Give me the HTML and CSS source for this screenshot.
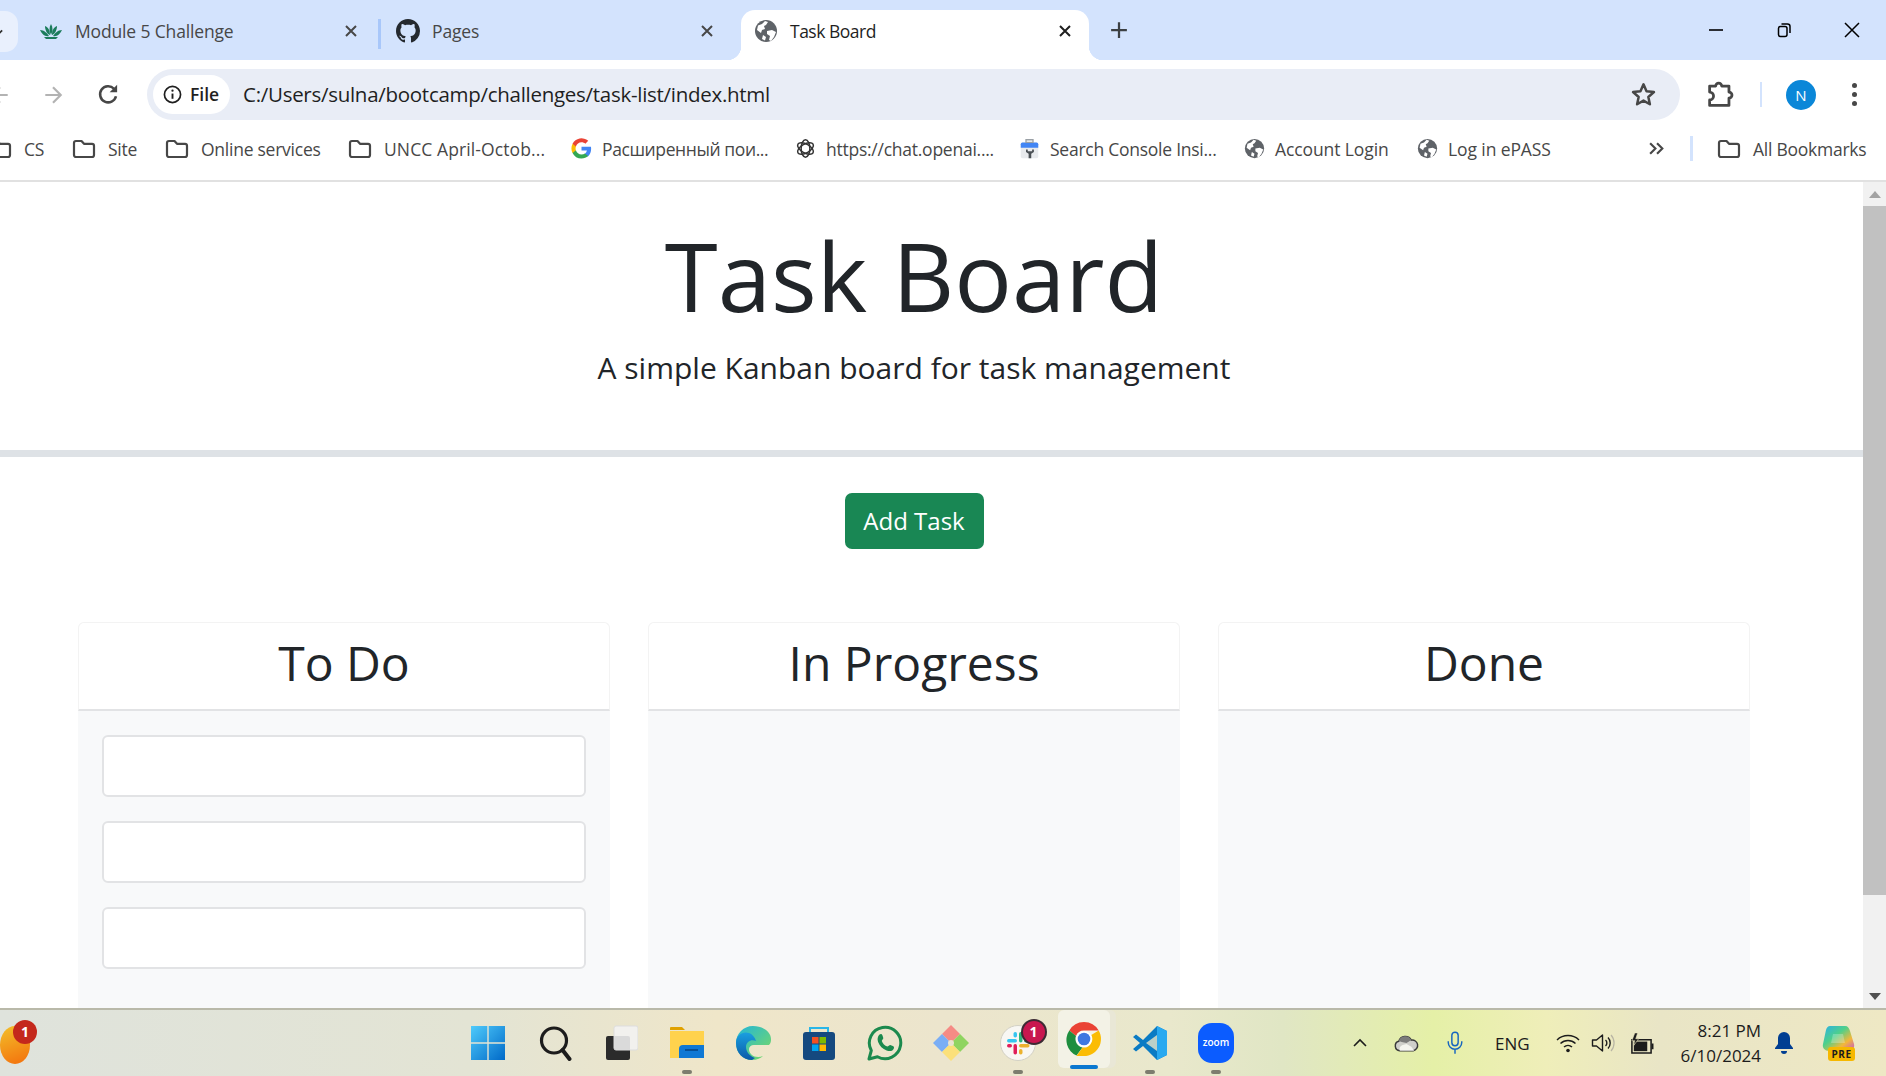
FILE: index.html
```html
<!DOCTYPE html>
<html lang="en">
<head>
<meta charset="UTF-8">
<meta name="viewport" content="width=device-width, initial-scale=1.0">
<title>Task Board</title>
<link rel="stylesheet" href="styles.css">
</head>
<body>

<svg class="sprites" width="0" height="0">
    <symbol id="folder" viewBox="0 0 24 20">
        <path d="M2 4a2 2 0 0 1 2-2h5.500l2.500 2.800h8a2 2 0 0 1 2 2V16a2 2 0 0 1-2 2H4a2 2 0 0 1-2-2z" fill="none" stroke="#474747" stroke-width="2.200" stroke-linejoin="round"/>
    </symbol>
    <symbol id="globe" viewBox="0 0 24 24">
        <circle cx="12" cy="12" r="11" fill="#5f6368"/>
        <path d="M4 6.500 8 5l3-3 3 1-2 3-2 1 1 3-3 1-1 3-4-3zM13 12l5-1 4 2-2 5-3 4-2-1 1-4-3-2zM9 16l3 2-1 3.500-3-1.500z" fill="#fff"/>
    </symbol>
    <symbol id="close-x" viewBox="0 0 14 14">
        <path d="M2 2l10 10M12 2 2 12" fill="none" stroke="currentColor" stroke-width="2"/>
    </symbol>
</svg>

<div id="window">

    <!-- Tabs -->
    <div class="tabstrip">
        <div class="tab-search">
            <svg viewBox="0 0 12 12"><path d="M1 4l5 5 5-5" fill="none" stroke="#333" stroke-width="2"/></svg>
        </div>
        <div class="tab tab-first">
            <svg class="favicon" viewBox="0 0 24 24">
                <path d="M12 5c2 3 2 7 0 11-2-4-2-8 0-11zM6 7c3 1 5 4 5 9-3-1-5-5-5-9zM18 7c-3 1-5 4-5 9 3-1 5-5 5-9zM1 11c4 0 7 3 9 6-4 1-7-2-9-6zM23 11c-4 0-7 3-9 6 4 1 7-2 9-6zM5 18h14l-2 2H7z" fill="#1c7c5c"/>
            </svg>
            <span class="tab-title">Module 5 Challenge</span>
            <svg class="tab-close"><use href="#close-x"/></svg>
        </div>
        <div class="tab-sep"></div>
        <div class="tab tab-second">
            <svg class="favicon" viewBox="0 0 16 16">
                <path d="M8 0C3.580 0 0 3.580 0 8c0 3.540 2.290 6.530 5.470 7.590.4.070.55-.17.55-.38 0-.19-.01-.82-.01-1.490-2.010.37-2.530-.49-2.690-.94-.09-.23-.48-.94-.82-1.130-.28-.15-.68-.52-.01-.53.63-.01 1.080.58 1.230.82.720 1.210 1.870.87 2.330.66.070-.52.280-.87.510-1.070-1.780-.2-3.640-.89-3.640-3.950 0-.87.310-1.590.820-2.150-.08-.2-.36-1.020.08-2.120 0 0 .67-.21 2.200.82.640-.18 1.320-.27 2-.27s1.360.09 2 .27c1.530-1.040 2.200-.82 2.200-.82.440 1.100.16 1.920.08 2.120.51.560.82 1.270.82 2.150 0 3.070-1.870 3.750-3.650 3.950.29.250.54.730.54 1.480 0 1.070-.01 1.930-.01 2.200 0 .21.150.460.550.380A8.010 8.010 0 0 0 16 8c0-4.420-3.580-8-8-8z" fill="#24292f"/>
            </svg>
            <span class="tab-title">Pages</span>
            <svg class="tab-close"><use href="#close-x"/></svg>
        </div>
        <div class="tab tab-active">
            <svg class="favicon"><use href="#globe"/></svg>
            <span class="tab-title">Task Board</span>
            <svg class="tab-close"><use href="#close-x"/></svg>
        </div>
        <svg class="new-tab" viewBox="0 0 16 16"><path d="M8 1v14M1 8h14" fill="none" stroke="#3c4043" stroke-width="2"/></svg>
        <div class="window-controls">
            <svg viewBox="0 0 16 16"><path d="M1 8h14" stroke="#000" stroke-width="1.600"/></svg>
            <svg viewBox="0 0 16 16"><rect x="2.500" y="4.500" width="8.500" height="10" rx="2" fill="none" stroke="#000" stroke-width="1.500"/><path d="M5.500 2h6a2.500 2.500 0 0 1 2.500 2.500V11" fill="none" stroke="#000" stroke-width="1.500"/></svg>
            <svg viewBox="0 0 16 16"><path d="M1 1l14 14M15 1 1 15" stroke="#000" stroke-width="1.500"/></svg>
        </div>
    </div>

    <!-- Toolbar -->
    <div class="toolbar">
        <svg class="nav-back" viewBox="0 0 20 20"><path d="M17 10H3M10 3l-7 7 7 7" fill="none" stroke="#b3b3b3" stroke-width="2"/></svg>
        <svg class="nav-forward" viewBox="0 0 20 20"><path d="M3 10h14M10 3l7 7-7 7" fill="none" stroke="#b3b3b3" stroke-width="2"/></svg>
        <svg class="nav-reload" viewBox="0 0 20 20"><path d="M16.500 11.500A7 7 0 1 1 14.800 5" fill="none" stroke="#474747" stroke-width="2.200"/><path d="M17.500 1.500v6.500H11z" fill="#474747"/></svg>
        <div class="omnibox">
            <div class="site-chip">
                <svg viewBox="0 0 20 20"><circle cx="10" cy="10" r="8.500" fill="none" stroke="#1f1f1f" stroke-width="1.800"/><path d="M10 9v5.500" stroke="#1f1f1f" stroke-width="2"/><circle cx="10" cy="6" r="1.200" fill="#1f1f1f"/></svg>
                <span>File</span>
            </div>
            <span class="url">C:/Users/sulna/bootcamp/challenges/task-list/index.html</span>
            <svg class="star" viewBox="0 0 24 24"><path d="M12 3l2.700 6.100 6.600.7-5 4.400 1.400 6.500L12 17.400l-5.700 3.300 1.400-6.500-5-4.400 6.600-.7z" fill="none" stroke="#474747" stroke-width="2.200" stroke-linejoin="round"/></svg>
        </div>
        <svg class="puzzle" viewBox="0 0 24 24"><path d="M3 5h5a2.500 2.500 0 0 1 5 0h6v5a2.500 2.500 0 0 1 0 5v6H3v-4.500a2.500 2.500 0 0 0 0-6.500z" fill="none" stroke="#474747" stroke-width="2.300" stroke-linejoin="round"/></svg>
        <div class="toolbar-sep"></div>
        <div class="avatar">N</div>
        <div class="kebab"><i></i><i></i><i></i></div>
    </div>

    <!-- Bookmarks -->
    <div class="bookmarks">
        <div class="bookmark bm-cs"><svg class="bm-icon"><use href="#folder"/></svg><span>CS</span></div>
        <div class="bookmark bm-site"><svg class="bm-icon"><use href="#folder"/></svg><span>Site</span></div>
        <div class="bookmark bm-online"><svg class="bm-icon"><use href="#folder"/></svg><span>Online services</span></div>
        <div class="bookmark bm-uncc"><svg class="bm-icon"><use href="#folder"/></svg><span>UNCC April-Octob...</span></div>
        <div class="bookmark bm-google">
            <svg class="bm-icon" viewBox="0 0 24 24">
                <path d="M23 12.300c0-.8-.1-1.600-.2-2.300H12v4.400h6.200a5.300 5.300 0 0 1-2.300 3.500v2.900h3.700c2.200-2 3.400-5 3.400-8.500z" fill="#4285f4"/>
                <path d="M12 23.500c3.100 0 5.700-1 7.600-2.800l-3.700-2.900c-1 .7-2.300 1.100-3.900 1.100-3 0-5.500-2-6.400-4.800H1.800v3A11.500 11.500 0 0 0 12 23.500z" fill="#34a853"/>
                <path d="M5.600 14.100a7 7 0 0 1 0-4.400v-3H1.800a11.500 11.500 0 0 0 0 10.400z" fill="#fbbc05"/>
                <path d="M12 4.800c1.700 0 3.200.6 4.400 1.700l3.300-3.300A11.500 11.500 0 0 0 1.800 6.700l3.800 3C6.500 6.800 9 4.800 12 4.800z" fill="#ea4335"/>
            </svg>
            <span>Расширенный пои...</span>
        </div>
        <div class="bookmark bm-chat">
            <svg class="bm-icon" viewBox="0 0 24 24" fill="none" stroke="#333" stroke-width="1.700">
                <ellipse cx="12" cy="12" rx="5" ry="10"/>
                <ellipse cx="12" cy="12" rx="5" ry="10" transform="rotate(60 12 12)"/>
                <ellipse cx="12" cy="12" rx="5" ry="10" transform="rotate(120 12 12)"/>
            </svg>
            <span>https://chat.openai....</span>
        </div>
        <div class="bookmark bm-console">
            <svg class="bm-icon" viewBox="0 0 24 24">
                <rect x="2" y="5" width="20" height="18" rx="2" fill="#e8eaed"/>
                <path d="M2 7a2 2 0 0 1 2-2h16a2 2 0 0 1 2 2v4H2z" fill="#4285f4"/>
                <path d="M8 2h8v3H8z" fill="none" stroke="#9aa0a6" stroke-width="1.500"/>
                <path d="M8 13v3l3 2v5h3v-5l3-2v-3h-2v2h-5v-2z" fill="#4a4f54"/>
            </svg>
            <span>Search Console Insi...</span>
        </div>
        <div class="bookmark bm-account"><svg class="bm-icon"><use href="#globe"/></svg><span>Account Login</span></div>
        <div class="bookmark bm-epass"><svg class="bm-icon"><use href="#globe"/></svg><span>Log in ePASS</span></div>
        <svg class="bm-more" viewBox="0 0 16 16"><path d="M2 3l5 5-5 5M8.500 3l5 5-5 5" fill="none" stroke="#474747" stroke-width="2"/></svg>
        <div class="bm-sep"></div>
        <div class="bookmark bm-all"><svg class="bm-icon"><use href="#folder"/></svg><span>All Bookmarks</span></div>
    </div>

    <!-- Page -->
    <div class="viewport">
        <div class="page">
            <div class="page-inner">
                <header class="hero">
                    <h1>Task Board</h1>
                    <p>A simple Kanban board for task management</p>
                </header>
                <hr class="divider">
                <div class="actions">
                    <button class="add-btn">Add Task</button>
                </div>
                <div class="board">
                    <section class="lane">
                        <h2 class="lane-head">To Do</h2>
                        <div class="lane-body">
                            <div class="task-card"></div>
                            <div class="task-card"></div>
                            <div class="task-card"></div>
                        </div>
                    </section>
                    <section class="lane">
                        <h2 class="lane-head">In Progress</h2>
                        <div class="lane-body"></div>
                    </section>
                    <section class="lane">
                        <h2 class="lane-head">Done</h2>
                        <div class="lane-body"></div>
                    </section>
                </div>
            </div>
        </div>
        <div class="scrollbar">
            <div class="scroll-btn"><i class="arrow-up"></i></div>
            <div class="scroll-track"><div class="scroll-thumb"></div></div>
            <div class="scroll-btn"><i class="arrow-down"></i></div>
        </div>
    </div>

    <!-- Taskbar -->
    <div class="taskbar">
        <div class="task-left">
            <div class="weather"></div>
            <span class="badge badge-red">1</span>
        </div>
        <div class="task-icons">
            <div class="task-slot">
                <svg viewBox="0 0 36 36">
                    <defs><linearGradient id="win" x1="0" y1="0" x2="1" y2="1"><stop offset="0" stop-color="#4fcbfb"/><stop offset="1" stop-color="#0069c8"/></linearGradient></defs>
                    <path d="M1 1h16.300v16.300H1zM18.700 1H35v16.300H18.700zM1 18.700h16.300V35H1zM18.700 18.700H35V35H18.700z" fill="url(#win)"/>
                </svg>
            </div>
            <div class="task-slot">
                <svg viewBox="-2 0 36 36"><circle cx="16" cy="15.500" r="12.500" fill="none" stroke="#1c1c1c" stroke-width="3.200"/><path d="M24.500 25l7 9" stroke="#1c1c1c" stroke-width="4" stroke-linecap="round"/></svg>
            </div>
            <div class="task-slot">
                <svg viewBox="-2 0 36 36"><rect x="2" y="11" width="24" height="24" rx="2" fill="#2b2b2b"/><rect x="10" y="1" width="24" height="24" rx="2" fill="#f2f2f2" fill-opacity=".88" stroke="#ddd"/></svg>
            </div>
            <div class="task-slot has-dot">
                <svg viewBox="0 0 36 36"><path d="M1 3a1 1 0 0 1 1-1h11l3 3H1z" fill="#e0a100"/><path d="M1 6h34v27H1z" fill="#ffd24d"/><path d="M10 33v-9a4 4 0 0 1 4-4h21v13z" fill="#0f78d4"/><rect x="16" y="24" width="13" height="2" fill="#064f96"/></svg>
            </div>
            <div class="task-slot">
                <svg viewBox="0 0 36 36">
                    <defs>
                        <linearGradient id="edgeA" x1="0" y1="0" x2="1" y2="1"><stop offset="0" stop-color="#1fb5dc"/><stop offset="1" stop-color="#7edc5d"/></linearGradient>
                        <linearGradient id="edgeB" x1="0" y1="0" x2="0" y2="1"><stop offset="0" stop-color="#1a9fe0"/><stop offset="1" stop-color="#0b5aa8"/></linearGradient>
                    </defs>
                    <path d="M18 1C8 1 1 9 1 18c0 10 7 17 16 17 5 0 9-2 11-4-7 3-14-1-14-7 0-2 2-4 5-4h15c2-2 2-4 2-6C36 7 28 1 18 1z" fill="url(#edgeA)"/>
                    <path d="M1 18C1 10 8 6 14 8c3 1 6 4 7 8-4-2-10 0-10 6 0 5 4 9 9 11l-3 2C8 35 1 28 1 18z" fill="url(#edgeB)"/>
                </svg>
            </div>
            <div class="task-slot">
                <svg viewBox="0 0 36 36"><path d="M9 8V3h18v5" fill="none" stroke="#29b6e8" stroke-width="2"/><rect x="2" y="7" width="32" height="28" rx="3" fill="#15497f"/><path d="M11 12h6.500v6.500H11z" fill="#f25022"/><path d="M18.500 12H25v6.500h-6.500z" fill="#7fba00"/><path d="M11 19.500h6.500V26H11z" fill="#00a4ef"/><path d="M18.500 19.500H25V26h-6.500z" fill="#ffb900"/></svg>
            </div>
            <div class="task-slot">
                <svg viewBox="0 0 36 36"><path d="M2 34l2.300-8.500A15.700 15.700 0 1 1 10.500 31.700z" fill="none" stroke="#1c8a4e" stroke-width="3" stroke-linejoin="round"/><path d="M12.500 9.500c1.500-1 2.500-.5 3 1l.8 2.500c.2.800-1.500 2-1.500 3 .8 2.500 3 4.700 5.500 5.500 1 0 2.200-1.700 3-1.500l2.500 1c1.500.5 1.500 1.500.8 3-1.500 2.500-4 2.500-7 1.500-4-1.500-7-4.500-8.500-8.500-1-3-.5-5.500 1.400-7.500z" fill="#1c8a4e"/></svg>
            </div>
            <div class="task-slot">
                <svg viewBox="0 0 36 36"><path d="M18 0l9 9-9 9-9-9z" fill="#f58b85"/><path d="M27 9l9 9-9 9-9-9z" fill="#8fd460"/><path d="M9 9l9 9-9 9-9-9z" fill="#7aaef5"/><path d="M18 18l9 9-9 9-9-9z" fill="#fbe07a"/><circle cx="18" cy="18" r="3" fill="#e9e3cf"/></svg>
            </div>
            <div class="task-slot has-dot">
                <svg viewBox="0 0 36 36">
                    <circle cx="18" cy="18" r="17.500" fill="#f8f7f3" stroke="#d2d0c4"/>
                    <rect x="7" y="14" width="10" height="3.500" rx="1.700" fill="#36c5f0"/><rect x="13.500" y="7" width="3.500" height="5.500" rx="1.700" fill="#36c5f0"/>
                    <rect x="19" y="7" width="3.500" height="10.500" rx="1.700" fill="#2eb67d"/><rect x="24" y="14" width="5.500" height="3.500" rx="1.700" fill="#2eb67d"/>
                    <rect x="19" y="19" width="10.500" height="3.500" rx="1.700" fill="#ecb22e"/><rect x="19" y="24" width="3.500" height="5.500" rx="1.700" fill="#ecb22e"/>
                    <rect x="13.500" y="19" width="3.500" height="10.500" rx="1.700" fill="#e01e5a"/><rect x="7" y="19" width="5" height="3.500" rx="1.700" fill="#e01e5a"/>
                </svg>
                <span class="badge badge-slack">1</span>
            </div>
            <div class="task-slot is-running">
                <svg viewBox="0 0 36 36">
                    <path d="M18 1a17 17 0 0 1 14.700 8.500H18a8.500 8.500 0 0 0-8 5.500L3.300 9.500A17 17 0 0 1 18 1z" fill="#ea4335"/>
                    <path d="M3.300 9.500 10 15a8.500 8.500 0 0 0 6.500 11.400L10.500 34.500A17 17 0 0 1 3.300 9.500z" fill="#1e8e3e"/>
                    <path d="M32.700 9.500A17 17 0 0 1 18 35h-7.500l6-8.600a8.500 8.500 0 0 0 8.800-12.400z" fill="#fbbc04"/>
                    <circle cx="18" cy="18" r="8" fill="#fff"/><circle cx="18" cy="18" r="6.300" fill="#3f78e0"/>
                </svg>
            </div>
            <div class="task-slot has-dot">
                <svg viewBox="0 0 36 36"><path d="M25 1l10 5v24l-10 5-14-14-7 5.500L1 24l7-6-7-6 3-2.500 7 5.500z" fill="#0a7bc4"/><path d="M25 1l10 5v24l-10 5z" fill="#29a9f0"/><path d="M25 10 14 18l11 8z" fill="#e8e6c9" fill-opacity=".8"/></svg>
            </div>
            <div class="task-slot has-dot"><div class="zoom-icon">zoom</div></div>
        </div>
        <div class="tray">
            <svg class="tray-chevron" viewBox="0 0 16 16"><path d="M2 11l6-6 6 6" fill="none" stroke="#1c1c1c" stroke-width="1.600"/></svg>
            <svg class="tray-cloud" viewBox="0 0 26 20"><path d="M6 18a5 5 0 0 1-1-9.800A7 7 0 0 1 18 7a5.500 5.500 0 0 1 2 11z" fill="#cfcfcb" stroke="#3a3a3a" stroke-width="1.500"/><path d="M6 18a5 5 0 0 1 3-6l4-1 5 3 3 4z" fill="#f5f5f0"/><path d="M5 8a7 7 0 0 1 13-1l-5 3-5-1z" fill="#7b7b7b"/></svg>
            <svg class="tray-mic" viewBox="0 0 20 26"><rect x="6.500" y="1" width="7" height="15" rx="3.500" fill="none" stroke="#1565c0" stroke-width="1.600"/><path d="M2.500 11v1.500a7.500 7.500 0 0 0 15 0V11M10 20v5" fill="none" stroke="#1565c0" stroke-width="1.600"/></svg>
            <span class="tray-lang">ENG</span>
            <svg class="tray-wifi" viewBox="0 0 24 20"><path d="M1 7a16 16 0 0 1 22 0M4.500 10.500a11 11 0 0 1 15 0M8 14a6 6 0 0 1 8 0" fill="none" stroke="#1c1c1c" stroke-width="1.500"/><circle cx="12" cy="17.500" r="1.800" fill="#1c1c1c"/></svg>
            <svg class="tray-sound" viewBox="0 0 24 20"><path d="M1.500 7h4l6-5v16l-6-5h-4z" fill="none" stroke="#1c1c1c" stroke-width="1.400" stroke-linejoin="round"/><path d="M14.500 7a4 4 0 0 1 0 6M17 4.500a8 8 0 0 1 0 11" fill="none" stroke="#1c1c1c" stroke-width="1.400"/><path d="M20 2a12 12 0 0 1 0 16" fill="none" stroke="#b9b6a4" stroke-width="1.200"/></svg>
            <svg class="tray-battery" viewBox="0 0 26 24"><path d="M3 8h20v14H3z" fill="none" stroke="#1c1c1c" stroke-width="1.600"/><path d="M5 10h14v10H5z" fill="#1c1c1c"/><path d="M23.500 12h2v6h-2z" fill="#1c1c1c"/><path d="M6 1 3 9h3l-1 5 5-7H7l2-6z" fill="#1c1c1c" stroke="#eee9c0" stroke-width=".6"/></svg>
            <div class="clock"><span>8:21 PM</span><span>6/10/2024</span></div>
            <svg class="tray-bell" viewBox="0 0 20 24"><path d="M10 1a6 6 0 0 1 6 6v6l3 4v1H1v-1l3-4V7a6 6 0 0 1 6-6z" fill="#003e92"/><path d="M7 20h6a3 3 0 0 1-6 0z" fill="#003e92"/></svg>
            <div class="copilot">
                <svg viewBox="0 0 34 30">
                    <defs><linearGradient id="cop" x1="0" y1="0" x2="1" y2="1"><stop offset="0" stop-color="#2bb0e8"/><stop offset=".4" stop-color="#4fd08a"/><stop offset=".7" stop-color="#f4b73a"/><stop offset="1" stop-color="#c04fd8"/></linearGradient></defs>
                    <path d="M9 1h15c3 0 4 2 5 5l4 13c1 4-2 7-5 7H8c-4 0-7-3-6-7L5 5c1-3 2-4 4-4z" fill="url(#cop)"/>
                    <path d="M12 9h10l2 9H10z" fill="#fff" fill-opacity=".25"/>
                </svg>
                <span class="pre-tag">PRE</span>
            </div>
        </div>
    </div>

</div>

</body>
</html>
```

FILE: styles.css
```css
/* Basic reset */
* {
    box-sizing: border-box;
}

html, body {
    margin: 0;
    height: 100%;
    overflow: hidden;
}

body {
    font-family: "Open Sans", "Noto Sans", sans-serif;
    color: #212529;
    background-color: #fff;
}

.sprites {
    display: block;
    height: 0;
}

#window {
    display: flex;
    flex-direction: column;
    height: 1076px;
}

/* Tabs */
.tabstrip {
    display: flex;
    flex: none;
    align-items: flex-start;
    height: 60px;
    padding-top: 10px;
    background-color: #d3e3fd;
}

.tab-search {
    display: flex;
    align-items: center;
    width: 18px;
    height: 41px;
    margin-top: 1px;
    overflow: hidden;
    border-radius: 0 13px 13px 0;
    background-color: #e9f0fd;
}

.tab-search svg {
    flex: none;
    width: 10px;
    height: 10px;
    margin-left: -7px;
}

.tab {
    position: relative;
    display: flex;
    align-items: center;
    height: 50px;
    padding-bottom: 8px;
    color: #474747;
    font-size: 17.500px;
}

.tab-title {
    flex: 1;
    letter-spacing: -0.15px;
}

.tab-close {
    width: 14px;
    height: 14px;
    color: #474747;
}

.favicon {
    width: 24px;
    height: 24px;
    margin-right: 12px;
}

.tab-first {
    width: 360px;
    padding-left: 21px;
    padding-right: 20px;
}

.tab-sep {
    width: 3px;
    height: 30px;
    margin-top: 9px;
    background-color: #a8c7fa;
}

.tab-second {
    width: 360px;
    padding-left: 15px;
    padding-right: 27px;
}

.tab-active {
    width: 348px;
    padding-left: 13px;
    padding-right: 17px;
    border-radius: 14px 14px 0 0;
    background-color: #fff;
    color: #1f1f1f;
}

.tab-active .tab-title {
    letter-spacing: -0.5px;
}

.tab-active .tab-close {
    color: #1f1f1f;
}

.tab-active::before,
.tab-active::after {
    content: "";
    position: absolute;
    bottom: 0;
    width: 14px;
    height: 14px;
}

.tab-active::before {
    left: -14px;
    background: radial-gradient(circle at 0 0, #d3e3fd 14px, #fff 14.500px);
}

.tab-active::after {
    right: -14px;
    background: radial-gradient(circle at 100% 0, #d3e3fd 14px, #fff 14.500px);
}

.new-tab {
    width: 18px;
    height: 18px;
    margin: 11px 0 0 21px;
}

.window-controls {
    display: flex;
    gap: 52px;
    margin: 12px 0 0 auto;
    padding-right: 26px;
}

.window-controls svg {
    width: 16px;
    height: 16px;
}

/* Toolbar */
.toolbar {
    display: flex;
    flex: none;
    align-items: center;
    height: 62px;
    padding-top: 7px;
    border-radius: 0 16px 0 0;
    background-color: #fff;
}

.nav-back {
    width: 22px;
    height: 22px;
    margin-left: -11px;
}

.nav-forward {
    width: 22px;
    height: 22px;
    margin-left: 31px;
}

.nav-reload {
    width: 23px;
    height: 23px;
    margin-left: 33px;
}

.omnibox {
    display: flex;
    align-items: center;
    width: 1533px;
    height: 51px;
    margin-left: 27px;
    padding: 0 6px;
    border-radius: 26px;
    background-color: #e9edf6;
}

.site-chip {
    display: flex;
    align-items: center;
    gap: 8px;
    width: 77px;
    height: 39px;
    padding-left: 10px;
    border-radius: 20px;
    background-color: #fff;
    color: #1f1f1f;
    font-size: 17.500px;
    font-weight: 600;
}

.site-chip svg {
    width: 19px;
    height: 19px;
}

.site-chip span {
    padding-bottom: 2px;
}

.url {
    flex: 1;
    margin-left: 13px;
    padding-bottom: 2px;
    color: #1f1f1f;
    font-size: 20.500px;
    letter-spacing: -0.28px;
}

.star {
    width: 27px;
    height: 27px;
    margin-right: 17px;
}

.puzzle {
    width: 29px;
    height: 29px;
    margin-left: 26px;
}

.toolbar-sep {
    width: 2px;
    height: 25px;
    margin-left: 25px;
    background-color: #d3e3fd;
}

.avatar {
    width: 30px;
    height: 30px;
    margin-left: 24px;
    border-radius: 50%;
    background-color: #0b87d8;
    color: #fff;
    font-size: 15px;
    line-height: 30px;
    text-align: center;
}

.kebab {
    display: flex;
    flex-direction: column;
    gap: 4px;
    margin-left: 36px;
}

.kebab i {
    width: 5px;
    height: 5px;
    border-radius: 50%;
    background-color: #474747;
}

/* Bookmarks */
.bookmarks {
    display: flex;
    flex: none;
    align-items: center;
    height: 60px;
    padding-bottom: 5px;
    border-bottom: 2px solid #e1e1e1;
    background-color: #fff;
    color: #474747;
    font-size: 17.500px;
    letter-spacing: -0.25px;
    white-space: nowrap;
}

.bookmark {
    display: flex;
    flex: none;
    align-items: center;
    gap: 12px;
}

.bm-icon {
    flex: none;
    width: 24px;
    height: 24px;
}

.bm-cs { width: 84px; margin-left: -12px; }
.bm-site { width: 93px; }
.bm-online { width: 183px; }
.bm-uncc { width: 223px; letter-spacing: 0.1px; }
.bm-google { width: 224px; letter-spacing: -0.4px; }
.bm-chat { width: 224px; }
.bm-console { width: 225px; }
.bm-account { width: 173px; letter-spacing: -0.1px; }
.bm-epass { width: 231px; letter-spacing: -0.1px; }
.bm-all { margin-left: -1px; }

.bm-google .bm-icon,
.bm-chat .bm-icon,
.bm-console .bm-icon,
.bm-account .bm-icon,
.bm-epass .bm-icon {
    width: 21px;
    height: 21px;
    margin-right: -2px;
}

.bm-more {
    width: 17px;
    height: 17px;
}

.bm-sep {
    width: 3px;
    height: 25px;
    margin-left: 25px;
    margin-right: 25px;
    background-color: #d3e3fd;
}

/* Page */
.viewport {
    display: flex;
    flex: 1;
    min-height: 0;
}

.page {
    flex: 1;
    min-width: 0;
    overflow: hidden;
    background-color: #fff;
}

.page-inner {
    width: 1898px;
    margin-left: -35px;
}

.hero {
    height: 268px;
    padding-top: 35px;
    text-align: center;
}

.hero h1 {
    margin: 0;
    font-size: 96px;
    font-weight: 400;
    line-height: 1.2;
}

.hero p {
    margin: 0;
    padding-top: 15px;
    font-size: 30px;
    line-height: 1.4;
}

.divider {
    height: 7px;
    margin: 0;
    border: 0;
    background-color: #dee2e6;
}

.actions {
    display: flex;
    justify-content: center;
    padding-top: 36px;
}

.add-btn {
    width: 139px;
    height: 56px;
    padding: 0 0 2px;
    border: 0;
    border-radius: 7px;
    background-color: #198754;
    color: #fff;
    font-family: inherit;
    font-size: 24px;
}

.board {
    display: grid;
    grid-template-columns: repeat(3, 532px);
    gap: 38px;
    width: 1672px;
    margin: 73px auto 0;
}

.lane {
    border-radius: 6px 6px 0 0;
    background-color: #f8f9fa;
}

.lane-head {
    height: 89px;
    margin: 0;
    border: 1px solid #f3f3f3;
    border-bottom: 2px solid #e2e3e5;
    border-radius: 6px 6px 0 0;
    background-color: #fff;
    font-size: 48px;
    font-weight: 400;
    line-height: 80px;
    text-align: center;
}

.lane-body {
    display: flex;
    flex-direction: column;
    gap: 24px;
    height: 400px;
    padding: 24px;
}

.task-card {
    height: 62px;
    border: 2px solid #e2e3e5;
    border-radius: 6px;
    background-color: #fff;
}

/* Scrollbar */
.scrollbar {
    display: flex;
    flex: none;
    flex-direction: column;
    width: 23px;
    background-color: #f1f1f1;
}

.scroll-btn {
    display: flex;
    flex: none;
    align-items: center;
    justify-content: center;
    height: 24px;
}

.scroll-btn i {
    width: 0;
    height: 0;
    border-left: 6px solid transparent;
    border-right: 6px solid transparent;
}

.arrow-up {
    border-bottom: 7px solid #a3a3a3;
}

.arrow-down {
    border-top: 7px solid #505050;
}

.scroll-track {
    flex: 1;
}

.scroll-thumb {
    height: 689px;
    background-color: #c1c1c1;
}

/* Taskbar */
.taskbar {
    display: flex;
    flex: none;
    align-items: center;
    height: 68px;
    border-top: 2px solid #b9b9a9;
    background: linear-gradient(90deg, #dfe3dc 0%, #e3e4d4 25%, #efe6c9 38%, #ece5cd 50%, #e9e8cc 62%, #e0e6c4 68%, #e5f0a7 76%, #efeeb9 82%, #e9e5c6 88%, #eee8c4 100%);
}

.task-left {
    position: relative;
    flex: none;
    width: 455px;
    height: 100%;
}

.weather {
    width: 30px;
    height: 38px;
    margin: 16px 0 0 0;
    border-radius: 50%;
    background: linear-gradient(160deg, #f3c02a, #f36f0c);
}

.badge {
    position: absolute;
    display: block;
    width: 24px;
    height: 24px;
    border-radius: 50%;
    color: #fff;
    font-size: 14px;
    font-weight: 700;
    line-height: 24px;
    text-align: center;
}

.badge-red {
    top: 10px;
    left: 13px;
    background-color: #c4281c;
}

.badge-slack {
    top: 11px;
    left: 38px;
    width: 22px;
    height: 22px;
    background-color: #c8174f;
    box-shadow: 0 0 0 2px #3c2a33;
    line-height: 22px;
}

.task-icons {
    display: flex;
    flex: none;
}

.task-slot {
    position: relative;
    display: flex;
    align-items: center;
    justify-content: center;
    width: 66.200px;
    height: 66px;
}

.task-slot svg {
    width: 36px;
    height: 36px;
}

.has-dot::after,
.is-running::after {
    content: "";
    position: absolute;
    left: 50%;
    bottom: 2px;
    width: 10px;
    height: 4px;
    margin-left: -5px;
    border-radius: 2px;
    background-color: #7d7d6e;
}

.is-running {
    width: 52px;
    height: 58px;
    margin: 0 7px;
    border-radius: 6px;
    background-color: #f3f2e6;
    box-shadow: 6px 0 0 #e9e7d6;
}

.is-running::after {
    bottom: -1px;
    width: 28px;
    margin-left: -14px;
    background-color: #0b78d0;
}

.zoom-icon {
    width: 36px;
    height: 40px;
    border-radius: 14px;
    background-color: #0b5cff;
    color: #fff;
    font-size: 10px;
    font-weight: 600;
    line-height: 38px;
    text-align: center;
}

.tray {
    display: flex;
    flex: 1;
    align-items: center;
    padding-left: 103px;
    color: #1c1c1c;
}

.tray-chevron { width: 16px; height: 16px; }
.tray-cloud { width: 25px; height: 20px; margin-left: 26px; }
.tray-mic { width: 18px; height: 26px; margin-left: 27px; }
.tray-lang { width: 35px; margin-left: 31px; font-size: 17px; }
.tray-wifi { width: 24px; height: 20px; margin-left: 26px; }
.tray-sound { width: 24px; height: 20px; margin-left: 11px; }
.tray-battery { width: 25px; height: 23px; margin-left: 14px; }

.clock {
    display: flex;
    flex-direction: column;
    align-items: flex-end;
    width: 107px;
    font-size: 17px;
    line-height: 25px;
}

.tray-bell { width: 20px; height: 24px; margin-left: 13px; }

.copilot {
    position: relative;
    width: 34px;
    height: 36px;
    margin-left: 27px;
}

.copilot svg {
    width: 34px;
    height: 30px;
}

.pre-tag {
    position: absolute;
    right: 0;
    bottom: 0;
    width: 27px;
    height: 14px;
    border-radius: 3px;
    background-color: #f6b800;
    color: #1c1c1c;
    font-size: 10px;
    font-weight: 700;
    line-height: 14px;
    letter-spacing: 0.5px;
    text-align: center;
}
```
